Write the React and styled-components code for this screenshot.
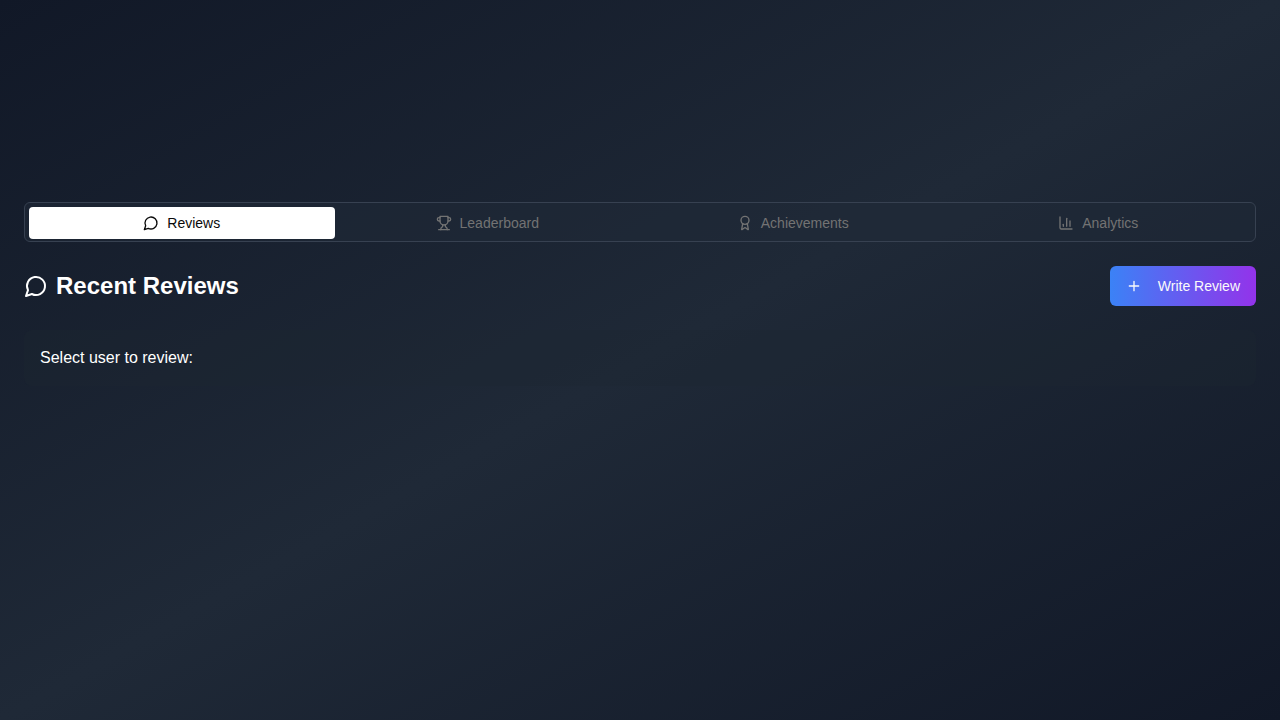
import React, { useState } from "react";
import styled, { createGlobalStyle } from "styled-components";

const GlobalStyle = createGlobalStyle`
  *, *::before, *::after { box-sizing: border-box; }
  body {
    margin: 0;
    font-family: "Liberation Sans", Arial, sans-serif;
    font-size: 16px;
    line-height: 24px;
    color: #ffffff;
    background: #111827;
  }
  h2, p { margin: 0; }
  button { font: inherit; border: 0; cursor: pointer; }
`;

const Page = styled.main`
  min-height: 100vh;
  padding: 202px 24px 24px;
  background: linear-gradient(to bottom right, #111827, #1f2937, #111827);
`;

const TabList = styled.div`
  display: grid;
  grid-template-columns: repeat(4, minmax(0, 1fr));
  padding: 4px 4px 2px;
  border: 1px solid #374151;
  border-radius: 6px;
  background: rgba(31, 41, 55, 0.5);
`;

const Tab = styled.button`
  display: flex;
  align-items: center;
  justify-content: center;
  gap: 8px;
  padding: 6px 12px;
  border-radius: 4px;
  font-size: 14px;
  line-height: 20px;
  white-space: nowrap;
  color: ${({ $active }) => ($active ? "#0a0a0a" : "#737373")};
  background: ${({ $active }) => ($active ? "#ffffff" : "transparent")};
`;

const Panel = styled.section`
  display: flex;
  flex-direction: column;
  gap: 24px;
  margin-top: 24px;
`;

const PanelHeader = styled.header`
  display: flex;
  align-items: center;
  justify-content: space-between;
`;

const Title = styled.h2`
  display: flex;
  align-items: center;
  gap: 8px;
  font-size: 24px;
  line-height: 32px;
  font-weight: 700;
`;

const WriteButton = styled.button`
  display: flex;
  align-items: center;
  gap: 16px;
  padding: 10px 16px;
  border-radius: 6px;
  font-size: 14px;
  line-height: 20px;
  color: #fafafa;
  background: linear-gradient(to right, #3b82f6, #9333ea);
`;

const UserPicker = styled.div`
  padding: 16px;
  border-radius: 8px;
  background: rgba(31, 41, 51, 0.3);
`;

const Svg = styled.svg`
  flex: none;
  width: ${({ $size }) => $size}px;
  height: ${({ $size }) => $size}px;
  fill: none;
  stroke: currentColor;
  stroke-width: 2;
  stroke-linecap: round;
  stroke-linejoin: round;
`;

const icons = {
  message: <path d="M7.9 20A9 9 0 1 0 4 16.1L2 22Z" />,
  trophy: (
    <>
      <path d="M6 9H4.5a2.5 2.5 0 0 1 0-5H6" />
      <path d="M18 9h1.5a2.5 2.5 0 0 0 0-5H18" />
      <path d="M4 22h16" />
      <path d="M10 14.66V17c0 .55-.47.98-.97 1.21C7.85 18.75 7 20.24 7 22" />
      <path d="M14 14.66V17c0 .55.47.98.97 1.21C16.15 18.75 17 20.24 17 22" />
      <path d="M18 2H6v7a6 6 0 0 0 12 0V2Z" />
    </>
  ),
  award: (
    <>
      <path d="m15.477 12.89 1.515 8.526a.5.5 0 0 1-.81.47l-3.58-2.687a1 1 0 0 0-1.197 0l-3.586 2.686a.5.5 0 0 1-.81-.469l1.514-8.526" />
      <circle cx="12" cy="8" r="6" />
    </>
  ),
  chart: (
    <>
      <path d="M3 3v16a2 2 0 0 0 2 2h16" />
      <path d="M18 17V9" />
      <path d="M13 17V5" />
      <path d="M8 17v-3" />
    </>
  ),
  plus: <path d="M5 12h14M12 5v14" />,
};

function Icon({ name, size = 16 }) {
  return (
    <Svg viewBox="0 0 24 24" $size={size} aria-hidden="true">
      {icons[name]}
    </Svg>
  );
}

const tabs = [
  { label: "Reviews", icon: "message" },
  { label: "Leaderboard", icon: "trophy" },
  { label: "Achievements", icon: "award" },
  { label: "Analytics", icon: "chart" },
];

export default function App() {
  const [active, setActive] = useState("Reviews");
  return (
    <>
      <GlobalStyle />
      <Page>
        <TabList role="tablist">
          {tabs.map(({ label, icon }) => (
            <Tab
              key={label}
              type="button"
              role="tab"
              aria-selected={active === label}
              $active={active === label}
              onClick={() => setActive(label)}
            >
              <Icon name={icon} />
              {label}
            </Tab>
          ))}
        </TabList>
        <Panel role="tabpanel">
          <PanelHeader>
            <Title>
              <Icon name="message" size={24} />
              Recent Reviews
            </Title>
            <WriteButton type="button">
              <Icon name="plus" />
              Write Review
            </WriteButton>
          </PanelHeader>
          <UserPicker>
            <p>Select user to review:</p>
          </UserPicker>
        </Panel>
      </Page>
    </>
  );
}
